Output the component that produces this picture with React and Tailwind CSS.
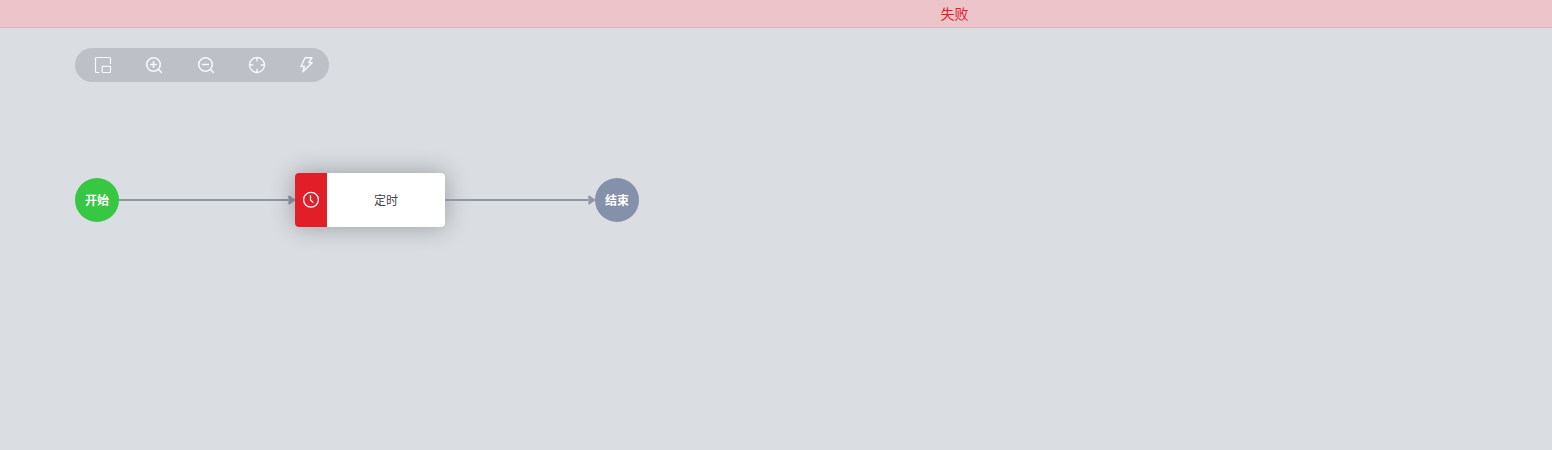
import React from "react";

const stroke = {
  fill: "none",
  stroke: "#f7f8f9",
  strokeWidth: 1.6,
  strokeLinecap: "round",
  strokeLinejoin: "round",
};

function MinimapIcon() {
  return (
    <svg width="18" height="18" viewBox="0 0 18 18" {...stroke} strokeWidth={1.2}>
      <path d="M5 16.5H2.5a1 1 0 0 1-1-1v-13a1 1 0 0 1 1-1h13a1 1 0 0 1 1 1v5" />
      <rect x="8.2" y="10.3" width="8.3" height="6.2" rx="0.8" />
    </svg>
  );
}

function ZoomIcon({ plus }) {
  return (
    <svg width="18" height="18" viewBox="0 0 18 18" {...stroke}>
      <circle cx="8.5" cy="8.5" r="6.8" />
      <path d="M13.4 13.4 16.3 16.3M5.7 8.5h5.6" />
      {plus && <path d="M8.5 5.7v5.6" />}
    </svg>
  );
}

function TargetIcon() {
  return (
    <svg width="18" height="18" viewBox="0 0 18 18" {...stroke} strokeWidth={1.4}>
      <circle cx="9" cy="9" r="7.5" />
      <path d="M9 1.5v3.3M9 13.2v3.3M1.5 9h3.3M13.2 9h3.3" />
    </svg>
  );
}

function BoltIcon() {
  return (
    <svg width="18" height="18" viewBox="0 0 18 18" {...stroke} strokeWidth={1.4}>
      <path d="M6 1.8h7L9.7 6.6h3.6L4 15.8l1.4-5.3H2z" />
    </svg>
  );
}

function ClockIcon() {
  return (
    <svg width="18" height="18" viewBox="0 0 18 18" {...stroke} strokeWidth={1.3}>
      <circle cx="9" cy="8.8" r="7.4" />
      <path d="M8.5 4.6v4.5l2.4 2.2" />
    </svg>
  );
}

function Connector({ className }) {
  return (
    <div className={`flex items-center ${className}`}>
      <div className="h-0.5 flex-1 bg-[#9196a3]" />
      <svg className="-mr-px" width="8" height="10" viewBox="0 0 8 10">
        <path d="M0.3 1.2Q0.3 0.2 1.3 0.6L8 5 1.3 9.4Q0.3 9.8 0.3 8.8z" fill="#9196a3" />
      </svg>
    </div>
  );
}

export default function App() {
  return (
    <div className="h-[450px] w-[1552px] overflow-hidden bg-[#dadde2] font-['Noto_Sans_CJK_SC',sans-serif] antialiased">
      <header className="flex h-7 items-center justify-center border-b border-[#d9b6bd] bg-[#edc4c9] pb-0.5 pl-[357px] text-sm text-[#e21e29]">
        失败
      </header>
      <div className="pt-5 pl-[75px]">
        <div className="flex h-[34px] w-[254px] items-center justify-between rounded-full bg-[#bdc0c7] pr-3 pl-[19px]">
          <MinimapIcon />
          <ZoomIcon plus />
          <ZoomIcon />
          <TargetIcon />
          <BoltIcon />
        </div>
      </div>
      <main className="mt-[91px] flex items-center pl-[75px] text-xs">
        <div className="flex size-11 items-center justify-center rounded-full bg-[#37c743] font-bold text-white">
          开始
        </div>
        <Connector className="w-44" />
        <div className="flex h-[54px] w-[150px] overflow-hidden rounded bg-white shadow-[0_0_24px_rgba(0,0,0,0.3)]">
          <div className="flex w-8 items-center justify-center bg-[#e21e29]">
            <ClockIcon />
          </div>
          <div className="flex flex-1 items-center justify-center text-[#43434d]">定时</div>
        </div>
        <Connector className="w-[150px]" />
        <div className="flex size-11 items-center justify-center rounded-full bg-[#8590ab] font-bold text-white">
          结束
        </div>
      </main>
    </div>
  );
}
